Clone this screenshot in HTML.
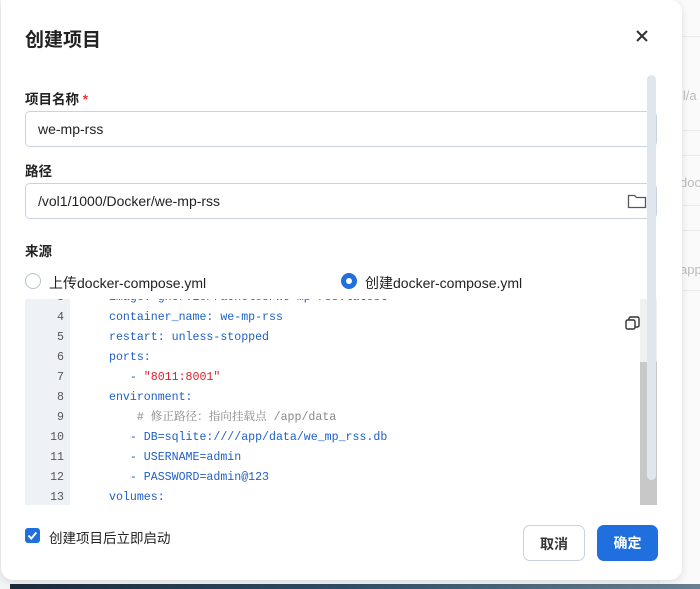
<!DOCTYPE html>
<html><head><meta charset="utf-8"><style>
*{margin:0;padding:0;box-sizing:border-box}
body{width:700px;height:589px;overflow:hidden;background:#f3f4f6;font-family:"Liberation Sans","Noto Sans CJK SC",sans-serif;position:relative}
.bg{position:absolute;left:660px;top:0;width:40px;height:589px;background:#fafafa}
.bg i{position:absolute;left:0;right:0;height:1px;background:#ececec}
.bg span{position:absolute;left:20px;font-size:13px;color:#bbb}
.strip{position:absolute;left:10px;right:0;top:584px;height:5px;background:linear-gradient(90deg,#1d2a3a,#30506a,#6a8090)}
.dlg{position:absolute;left:1px;top:0;width:681px;height:580px;background:#fff;border-radius:0 12px 12px 12px;box-shadow:0 2px 8px rgba(0,0,0,.12)}
.t{position:absolute;left:24px;top:25px;font-size:19px;font-weight:bold;color:#222}
.x{position:absolute;left:634px;top:29px}
.lbl{position:absolute;left:24px;font-size:13.5px;font-weight:bold;color:#222}
.inp{position:absolute;left:24px;width:632px;height:36px;border:1px solid #c9d3e0;border-radius:5px;font-size:14px;color:#222;padding:9px 12px}
.rad{position:absolute;top:273px;width:16px;height:16px;border-radius:50%}
.rt{position:absolute;top:273px;font-size:14px;color:#222}
.ed{position:absolute;left:24px;top:299px;width:632px;height:206px;overflow:hidden;background:#fff}
.gut{position:absolute;left:0;top:0;width:45px;height:206px;background:#eef2f7}
.ln{position:absolute;font-family:"Liberation Mono","Noto Serif CJK SC",monospace;font-size:11.6px;line-height:20px;white-space:pre}
.num{left:0;width:39px;text-align:right;color:#555}
.c{left:84px;color:#2060c8}
.sb{position:absolute;left:615px;top:0;width:17px;height:206px;background:#f0f0f0}
.sb b{position:absolute;left:0;top:63px;width:17px;height:143px;background:#c8c8c8}
.osb{position:absolute;left:646px;top:75px;width:9px;height:405px;background:#e0e6ee;border-radius:5px}
.cb{position:absolute;left:24px;top:528px;width:15px;height:15px;background:#1f6fde;border-radius:3px}
.btn{position:absolute;top:525px;height:36px;border-radius:7px;font-size:14px;font-weight:bold;text-align:center;line-height:36px}
</style></head><body>
<div class="bg"><i style="top:36px"></i><i style="top:130px"></i><i style="top:155px"></i><i style="top:205px"></i><i style="top:230px"></i><i style="top:290px"></i>
<span style="top:88px">ll/a</span><span style="top:175px">doc</span><span style="top:262px">app,</span></div>
<div class="strip"></div>
<div class="dlg">
<div class="t">创建项目</div>
<svg class="x" width="14" height="14" viewBox="0 0 14 14"><path d="M2 2L12 12M12 2L2 12" stroke="#333" stroke-width="2"/></svg>
<div class="lbl" style="top:88px">项目名称 <span style="color:#e33">*</span></div>
<div class="inp" style="top:111px">we-mp-rss</div>
<div class="lbl" style="top:160px">路径</div>
<div class="inp" style="top:183px">/vol1/1000/Docker/we-mp-rss
<svg style="position:absolute;right:9px;top:9px" width="20" height="16" viewBox="0 0 20 16"><path d="M1.5 2.5h6l2 2h9v10h-17z" fill="none" stroke="#556" stroke-width="1.3"/></svg></div>
<div class="lbl" style="top:240px">来源</div>
<div class="rad" style="left:24px;border:1.5px solid #b8c2cf"></div>
<div class="rt" style="left:48px">上传docker-compose.yml</div>
<div class="rad" style="left:340px;background:#1f6fde"><div style="position:absolute;left:5px;top:5px;width:6px;height:6px;border-radius:50%;background:#fff"></div></div>
<div class="rt" style="left:364px">创建docker-compose.yml</div>
<div class="ed">
<div class="gut"></div>
<div class="ln num" style="top:-11px">3</div><div class="ln c" style="top:-11px">image: ghcr.io/rachelos/we-mp-rss:latest</div>
<div class="ln num" style="top:9px">4</div><div class="ln c" style="top:9px">container_name: we-mp-rss</div>
<div class="ln num" style="top:29px">5</div><div class="ln c" style="top:29px">restart: unless-stopped</div>
<div class="ln num" style="top:49px">6</div><div class="ln c" style="top:49px">ports:</div>
<div class="ln num" style="top:69px">7</div><div class="ln c" style="top:69px">   - <span style="color:#e0202a">"8011:8001"</span></div>
<div class="ln num" style="top:89px">8</div><div class="ln c" style="top:89px">environment:</div>
<div class="ln num" style="top:109px">9</div><div class="ln c" style="top:109px;color:#888">    # 修正路径：指向挂载点 /app/data</div>
<div class="ln num" style="top:129px">10</div><div class="ln c" style="top:129px">   - DB=sqlite:////app/data/we_mp_rss.db</div>
<div class="ln num" style="top:149px">11</div><div class="ln c" style="top:149px">   - USERNAME=admin</div>
<div class="ln num" style="top:169px">12</div><div class="ln c" style="top:169px">   - PASSWORD=admin@123</div>
<div class="ln num" style="top:189px">13</div><div class="ln c" style="top:189px">volumes:</div>
<svg style="position:absolute;left:600px;top:17px" width="15" height="15" viewBox="0 0 15 15"><rect x="1" y="4" width="9" height="9" rx="1.5" fill="#fff" stroke="#333" stroke-width="1.4"/><path d="M4 4V2.5A1.5 1.5 0 0 1 5.5 1H12.5A1.5 1.5 0 0 1 14 2.5V9.5A1.5 1.5 0 0 1 12.5 11H10" fill="none" stroke="#333" stroke-width="1.4"/></svg>
<div class="sb"><b></b></div>
</div>
<div class="osb"></div>
<div class="cb"><svg width="15" height="15" viewBox="0 0 15 15"><path d="M3.5 7.5l2.8 3 5-6" fill="none" stroke="#fff" stroke-width="2"/></svg></div>
<div style="position:absolute;left:48px;top:527px;font-size:13.5px;color:#222">创建项目后立即启动</div>
<div class="btn" style="left:522px;width:62px;border:1px solid #c9d3e0;color:#333;background:#fff">取消</div>
<div class="btn" style="left:596px;width:61px;background:#1f6fde;color:#fff">确定</div>
</div>
</body></html>
